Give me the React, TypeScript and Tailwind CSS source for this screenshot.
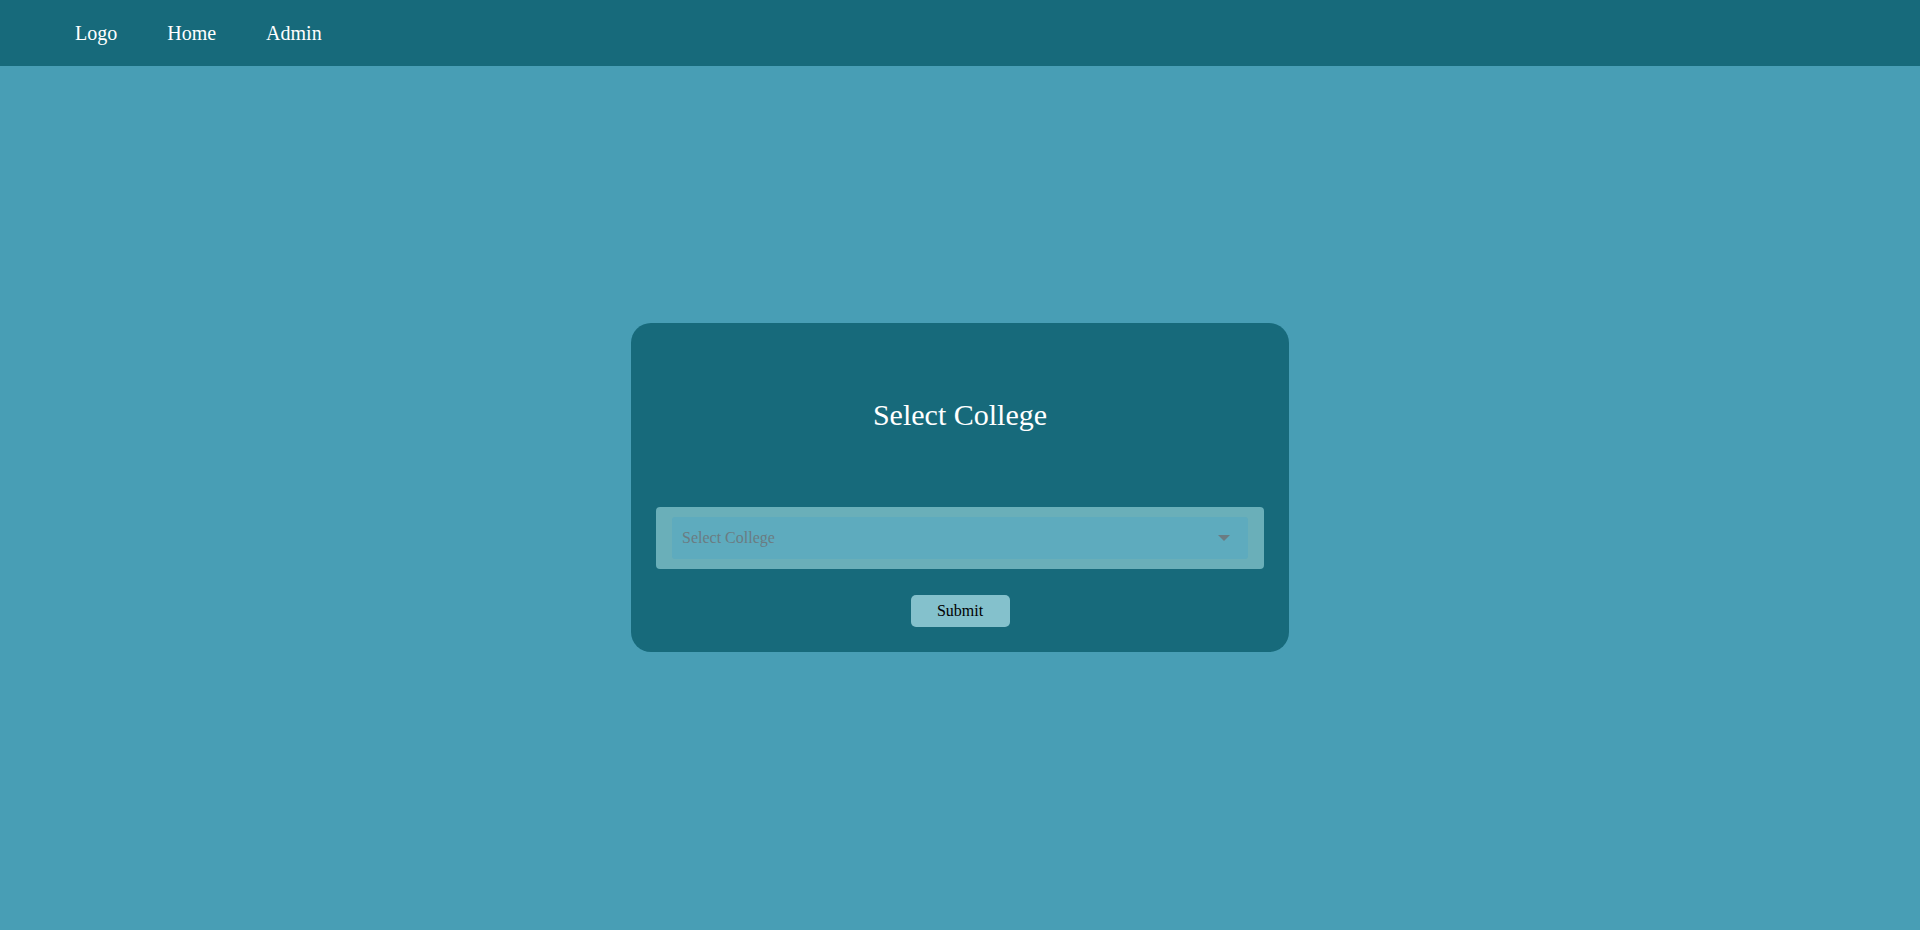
import { useState } from "react";

const links = ["Logo", "Home", "Admin"];

const App = () => {
  const [college] = useState("");

  return (
    <div className="min-h-screen bg-[#489eb5] font-['Liberation_Serif',serif]">
      {/* navbar */}
      <nav className="h-[66px] bg-[#176a7b] flex items-center pl-[75px] gap-[50px]">
        {links.map((l) => (
          <a key={l} className="text-white text-[20px] leading-none cursor-pointer">
            {l}
          </a>
        ))}
      </nav>

      <div className="flex justify-center pt-[257px]">
        <div className="w-[658px] bg-[#176a7b] rounded-[20px] px-[25px] pt-[74px] pb-[25px] flex flex-col items-center">
          <h2 className="text-white text-[30px] leading-[36px] mb-[74px]">Select College</h2>

          <div className="w-full bg-[#6aafb9] rounded-[4px] px-[16px] py-[10px]">
            <div className="h-[42px] bg-[#5eabbe] rounded-[3px] flex items-center justify-between pl-[10px] pr-[18px]">
              <span className="text-[#6b7c82] text-[16px]">{college || "Select College"}</span>
              <svg width="12" height="6" viewBox="0 0 12 6">
                <path d="M0 0 L12 0 L6 6 Z" fill="#6b7c82" />
              </svg>
            </div>
          </div>

          <button className="mt-[26px] w-[99px] h-[32px] bg-[#84c1cc] rounded-[5px] text-black text-[16px]">
            Submit
          </button>
        </div>
      </div>
    </div>
  );
};

export default App;
